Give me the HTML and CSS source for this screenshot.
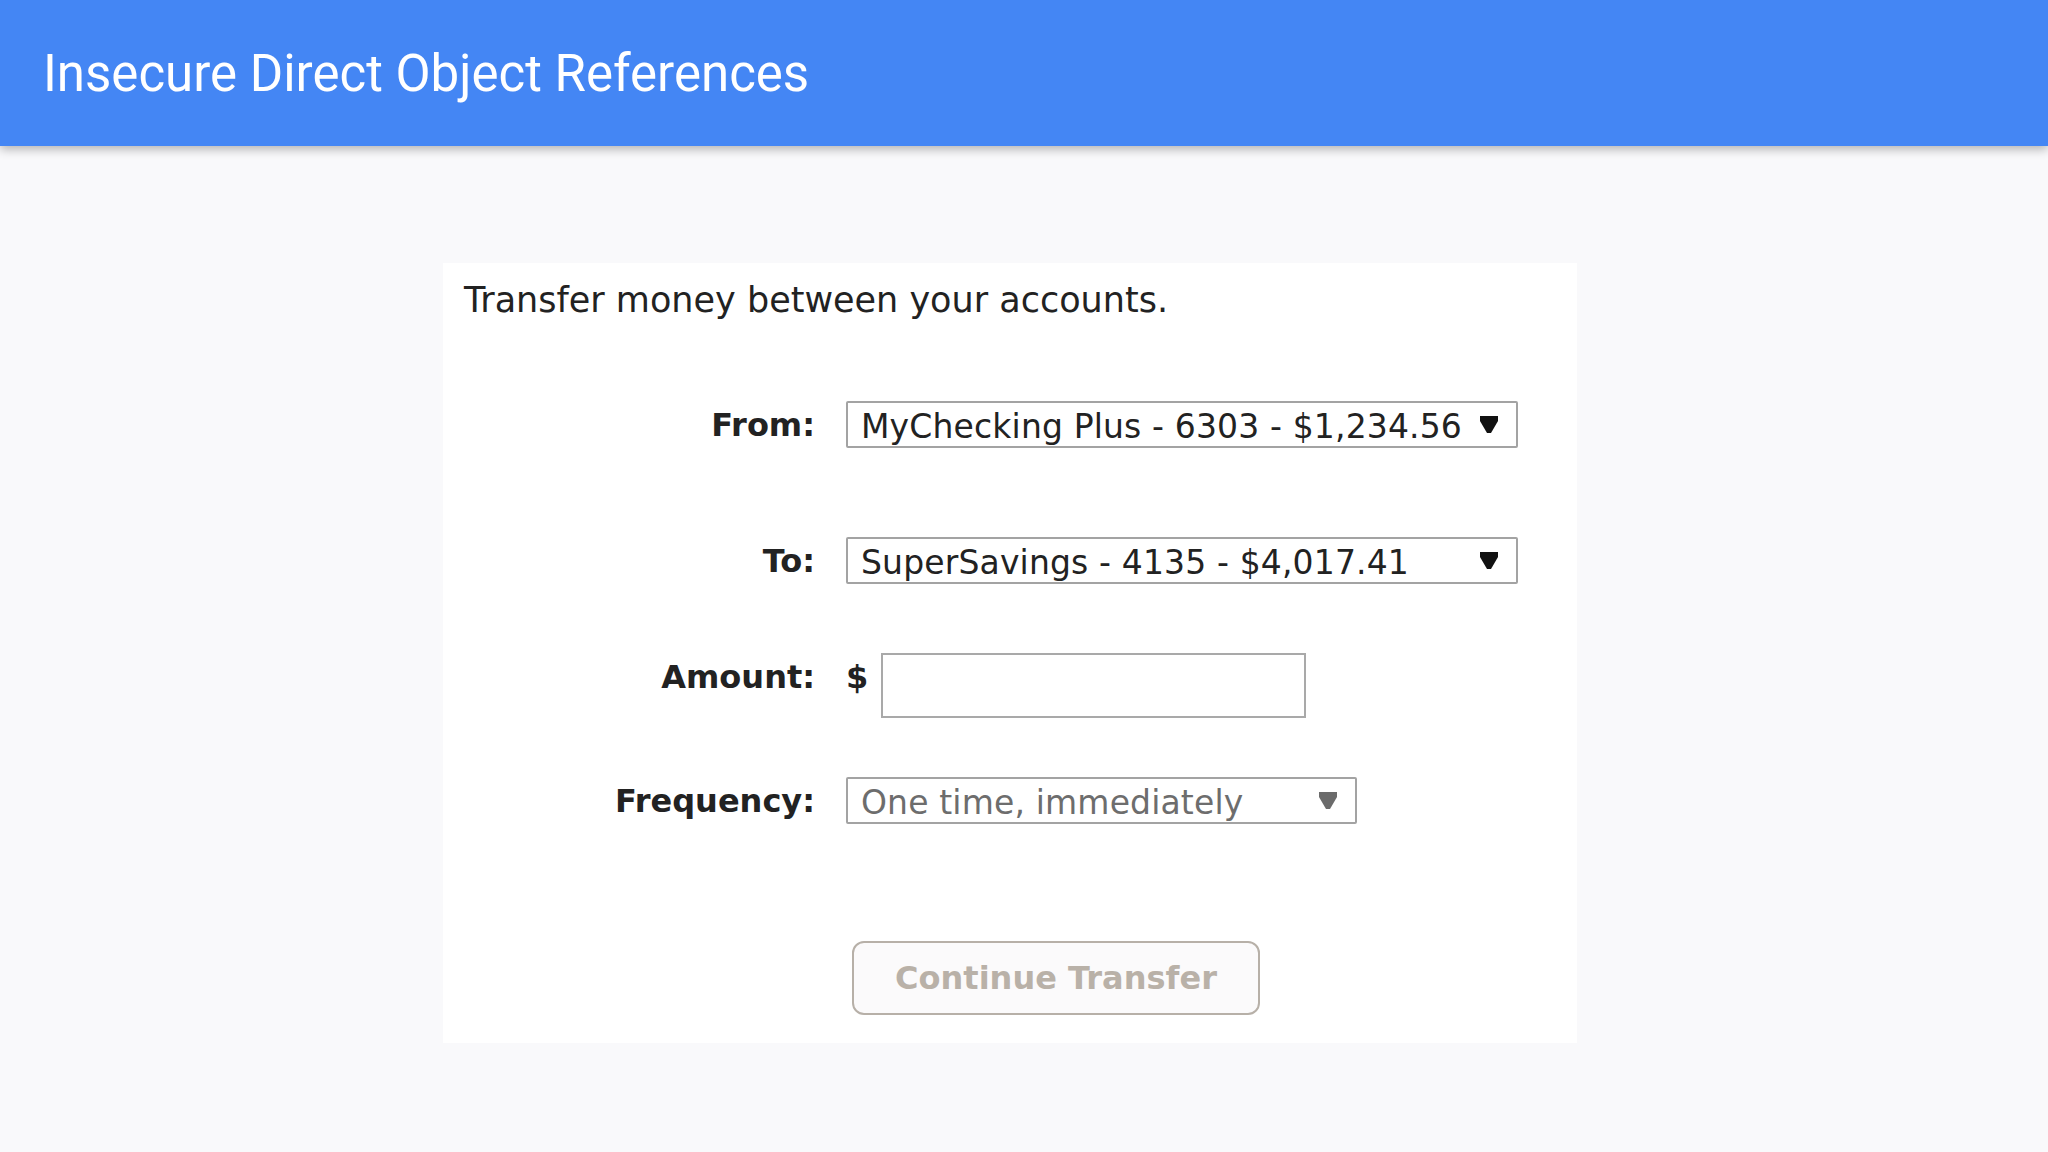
FILE: index.html
```html
<!DOCTYPE html>
<html lang="en">
<head>
    <meta charset="UTF-8">
    <meta name="viewport" content="width=device-width, initial-scale=1.0">
    <title>Insecure Direct Object References</title>
    <link rel="stylesheet" href="styles.css">
</head>
<body>
    <header class="topbar">
        <h1>Insecure Direct Object References</h1>
    </header>

    <div class="card">
        <p class="intro">Transfer money between your accounts.</p>

        <div class="row row-from">
            <label class="label">From:</label>
            <div class="select select-wide">
                <span>MyChecking Plus - 6303 - $1,234.56</span>
                <svg class="arrow" width="18" height="17" viewBox="0 0 18 17"><polygon points="0,0 18,0 18,5 11,17 7,17 0,5" fill="#111"/></svg>
            </div>
        </div>

        <div class="row row-to">
            <label class="label">To:</label>
            <div class="select select-wide">
                <span>SuperSavings - 4135 - $4,017.41</span>
                <svg class="arrow" width="18" height="17" viewBox="0 0 18 17"><polygon points="0,0 18,0 18,5 11,17 7,17 0,5" fill="#111"/></svg>
            </div>
        </div>

        <div class="row row-amount">
            <label class="label label-up" for="amount">Amount:</label>
            <div class="control">
                <span class="dollar label-up">$</span>
                <input type="text" id="amount" class="amount-input">
            </div>
        </div>

        <div class="row row-freq">
            <label class="label">Frequency:</label>
            <div class="select select-freq">
                <span>One time, immediately</span>
                <svg class="arrow" width="18" height="17" viewBox="0 0 18 17"><polygon points="0,0 18,0 18,5 11,17 7,17 0,5" fill="#6b6b6b"/></svg>
            </div>
        </div>

        <div class="actions">
            <button class="btn" disabled>Continue Transfer</button>
        </div>
    </div>
</body>
</html>
```
FILE: styles.css
```css
body {
    margin: 0;
    background-color: #f9f9fb;
    font-family: "DejaVu Sans", Verdana, sans-serif;
    color: #222;
}

.topbar {
    height: 146px;
    background-color: #4486f4;
    display: flex;
    align-items: center;
    padding-left: 43px;
    box-shadow: 0 3px 10px rgba(0, 0, 0, 0.3);
}

.topbar h1 {
    margin: 0;
    font-family: Roboto, "Noto Sans", sans-serif;
    font-weight: 400;
    font-size: 51px;
    color: #fff;
}

.card {
    width: 1134px;
    margin: 117px 0 0 443px;
    padding: 15px 0 28px;
    background-color: #fff;
}

.intro {
    margin: 0 0 0 21px;
    font-size: 35px;
    line-height: 44px;
}

.row {
    display: flex;
    align-items: center;
    gap: 31px;
}

.row-from { margin-top: 79px; }
.row-to { margin-top: 89px; }
.row-amount { margin-top: 69px; }
.row-freq { margin-top: 59px; }

.label {
    width: 372px;
    text-align: right;
    font-weight: bold;
    font-size: 32px;
}

.label-up {
    margin-bottom: 18px;
}

.select {
    box-sizing: border-box;
    height: 47px;
    display: flex;
    align-items: center;
    justify-content: space-between;
    padding: 3px 18px 0 13px;
    border: 2px solid #a3a3a3;
    border-radius: 2px;
    font-size: 33px;
    letter-spacing: 0.15px;
    background-color: #fff;
}

.select .arrow {
    margin-top: -3px;
}

.select-wide { width: 672px; }

.select-freq {
    width: 511px;
    color: #6d6d6d;
}

.control {
    display: flex;
    align-items: center;
}

.dollar {
    width: 35px;
    font-weight: bold;
    font-size: 32px;
}

.amount-input {
    box-sizing: border-box;
    width: 425px;
    height: 65px;
    margin: 0;
    border: 2px solid #a9a9a9;
    font-size: 33px;
}

.actions {
    margin: 117px 0 0 409px;
}

.btn {
    width: 408px;
    height: 74px;
    border: 2px solid #b7b0a8;
    border-radius: 12px;
    background-color: #fbfafb;
    color: #b9b1a8;
    font-family: "DejaVu Sans", Verdana, sans-serif;
    font-weight: bold;
    font-size: 32px;
}
```
